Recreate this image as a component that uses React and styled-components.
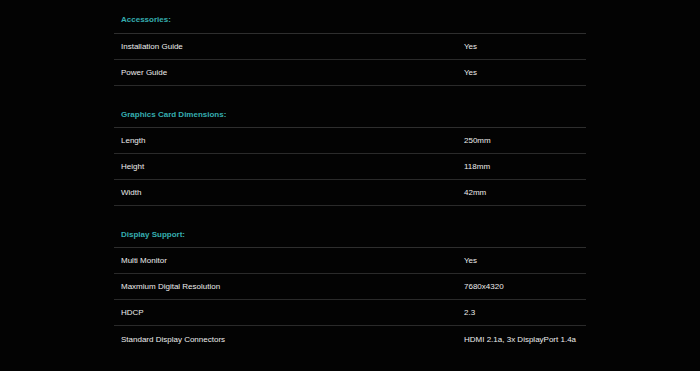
import styled, { createGlobalStyle } from "styled-components";

const GlobalStyle = createGlobalStyle`
  html, body {
    margin: 0;
    padding: 0;
    background: #030303;
  }
  body {
    font-family: "Liberation Sans", Arial, sans-serif;
  }
`;

const Page = styled.div`
  width: 700px;
  height: 371px;
  box-sizing: border-box;
  padding-top: 1px;
  overflow: hidden;
  background: #030303;
  display: flex;
  justify-content: center;
`;

const Table = styled.div`
  width: 472px;
  display: flex;
  flex-direction: column;
`;

const Section = styled.section`
  display: flex;
  flex-direction: column;
  & + & {
    margin-top: 9px;
  }
`;

const SectionTitle = styled.h3`
  margin: 0;
  height: 33px;
  box-sizing: border-box;
  padding: 14px 7px 0;
  font-size: 8px;
  line-height: 10px;
  font-weight: 700;
  color: #35aeb0;
  border-bottom: 1px solid #2e2e2e;
  ${Section} + ${Section} & {
    padding-top: 15px;
  }
`;

const Row = styled.div`
  display: grid;
  grid-template-columns: 343px 1fr;
  height: 26px;
  box-sizing: border-box;
  align-items: center;
  border-bottom: ${(props) => (props.$last ? "none" : "1px solid #2a2a2a")};
  font-size: 8px;
  color: #ececec;
`;

const Cell = styled.span`
  padding: 0 7px;
`;

const specs = [
  {
    title: "Accessories:",
    rows: [
      ["Installation Guide", "Yes"],
      ["Power Guide", "Yes"],
    ],
  },
  {
    title: "Graphics Card Dimensions:",
    rows: [
      ["Length", "250mm"],
      ["Height", "118mm"],
      ["Width", "42mm"],
    ],
  },
  {
    title: "Display Support:",
    rows: [
      ["Multi Monitor", "Yes"],
      ["Maxmium Digital Resolution", "7680x4320"],
      ["HDCP", "2.3"],
      ["Standard Display Connectors", "HDMI 2.1a, 3x DisplayPort 1.4a"],
    ],
  },
];

export default function App() {
  return (
    <>
      <GlobalStyle />
      <Page>
        <Table>
          {specs.map((section, si) => (
            <Section key={section.title}>
              <SectionTitle>{section.title}</SectionTitle>
              {section.rows.map(([label, value], i) => (
                <Row
                  key={label}
                  $last={si === specs.length - 1 && i === section.rows.length - 1}
                >
                  <Cell>{label}</Cell>
                  <Cell>{value}</Cell>
                </Row>
              ))}
            </Section>
          ))}
        </Table>
      </Page>
    </>
  );
}
